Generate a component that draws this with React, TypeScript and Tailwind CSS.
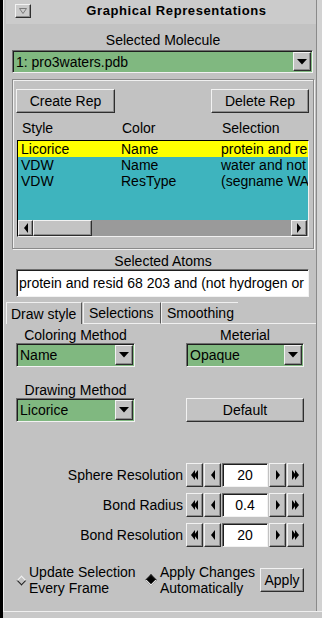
import React from "react";

// bevel helpers (Tk-style 3D borders)
const RAISED =
  "border border-t-[#f2f2f2] border-l-[#f2f2f2] border-r-[#2e2e2e] border-b-[#2e2e2e] shadow-[inset_-1px_-1px_0_#8c8c8c]";
const SUNKEN =
  "border border-t-[#6e6e6e] border-l-[#6e6e6e] border-r-[#f2f2f2] border-b-[#f2f2f2] shadow-[inset_1px_1px_0_#1e1e1e]";

function DownArrow() {
  return (
    <svg width="10" height="6" viewBox="0 0 10 6">
      <path d="M0 0h10L5 5.5z" fill="#000" />
    </svg>
  );
}

function Tri({ dir, double }: { dir: "l" | "r"; double?: boolean }) {
  const one = dir === "l" ? "M0 5L4 0v10z" : "M0 0l4 5-4 5z";
  const two = dir === "l" ? "M3 5L7 0v10z" : "M3 0l4 5-4 5z";
  return (
    <svg width={double ? 7 : 4} height="10" viewBox={`0 0 ${double ? 7 : 4} 10`}>
      <path d={one} fill="#000" />
      {double && <path d={two} fill="#000" />}
    </svg>
  );
}

function OptionMenu({ value, className }: { value: string; className: string }) {
  return (
    <div className={`flex bg-[#80b880] ${SUNKEN} ${className}`}>
      <span className="flex-1 pl-[3px] self-center whitespace-nowrap overflow-hidden">{value}</span>
      <span
        className={`w-[18px] my-[1px] mr-[1px] flex items-center justify-center bg-[#c3c3c3] ${RAISED}`}
      >
        <DownArrow />
      </span>
    </div>
  );
}

function Spinner({ label, value }: { label: string; value: string }) {
  const btn = `w-[17px] h-[24px] flex items-center justify-center bg-[#c3c3c3] ${RAISED}`;
  return (
    <div className="flex items-center h-[24px] pr-[12px]">
      <span className="flex-1 text-right pr-[3px]">{label}</span>
      <div className="flex gap-[1px]">
        <span className={btn}><Tri dir="l" double /></span>
        <span className={btn}><Tri dir="l" /></span>
        <span className={`w-[46px] h-[24px] flex items-center justify-center bg-white ${SUNKEN}`}>
          {value}
        </span>
        <span className={btn}><Tri dir="r" /></span>
        <span className={btn}><Tri dir="r" double /></span>
      </div>
    </div>
  );
}

const REPS = [
  { style: "Licorice", color: "Name", sel: "protein and resid 68 203", active: true },
  { style: "VDW", color: "Name", sel: "water and not hydrogen", active: false },
  { style: "VDW", color: "ResType", sel: "(segname WAT) and noh", active: false },
];

export default function App() {
  return (
    <div className="w-[322px] h-[618px] bg-black flex font-['Liberation_Sans',Arial,sans-serif] text-[14px] leading-[16px] text-black">
      <div className="ml-[3px] flex-1 flex flex-col bg-[#cdcdcd]">
        <div className="flex-1 flex min-h-0">
          {/* left frame */}
          <div className="w-[3px] bg-[#c2c2c2] border-l border-l-[#ececec]" />

          <div className="w-[310px] flex flex-col bg-[#c2c2c2]">
            {/* title bar */}
            <div className="h-[24px] flex items-start bg-[#cbcbcb]">
              <span className={`ml-[9px] mt-[4px] w-[16px] h-[14px] flex items-center justify-center bg-[#cbcbcb] ${RAISED}`}>
                <svg width="8" height="6" viewBox="0 0 8 6">
                  <path d="M0.5 0.5h7L4 5.5z" fill="none" stroke="#7a7a7a" />
                </svg>
              </span>
              <span className="flex-1 pl-[6px] text-center font-bold text-[13px] tracking-[0.6px] leading-[22px]">
                Graphical Representations
              </span>
            </div>

            {/* molecule selection */}
            <div className="mt-[8px] ml-[6px] w-[302px] text-center h-[16px]">Selected Molecule</div>
            <OptionMenu value="1: pro3waters.pdb" className="mt-[2px] ml-[6px] w-[301px] h-[23px]" />

            {/* reps group */}
            <div className="mt-[6px] ml-[6px] w-[302px] h-[170px] flex flex-col border border-[#8a8a8a] shadow-[inset_1px_1px_0_#f0f0f0,1px_1px_0_#f0f0f0]">
              <div className="mt-[9px] pl-[3px] pr-[4px] flex justify-between">
                <button className={`w-[99px] h-[24px] bg-[#c3c3c3] ${RAISED}`}>Create Rep</button>
                <button className={`w-[98px] h-[24px] bg-[#c3c3c3] ${RAISED}`}>Delete Rep</button>
              </div>
              <div className="mt-[7px] h-[16px] pl-[9px] flex">
                <span className="w-[100px]">Style</span>
                <span className="w-[100px]">Color</span>
                <span className="w-[80px]">Selection</span>
              </div>
              <div className="mt-[4px] ml-[4px] w-[292px] h-[97px] flex flex-col bg-[#3eb4be] border border-t-black border-l-black border-r-[#f0f0f0] border-b-[#f0f0f0]">
                {REPS.map((r, i) => (
                  <div
                    key={i}
                    className={`h-[16px] pl-[3px] flex whitespace-nowrap overflow-hidden ${r.active ? "bg-[#ffff00]" : ""}`}
                  >
                    <span className="w-[100px] shrink-0">{r.style}</span>
                    <span className="w-[100px] shrink-0">{r.color}</span>
                    <span className="shrink-0">{r.sel}</span>
                  </div>
                ))}
                <div className="flex-1" />
                {/* horizontal scrollbar */}
                <div className="h-[16px] flex bg-[#9a9a9a]">
                  <span className={`w-[15px] flex items-center justify-center bg-[#c3c3c3] ${RAISED}`}>
                    <Tri dir="l" />
                  </span>
                  <span className={`w-[59px] bg-[#c3c3c3] ${RAISED}`} />
                  <span className="flex-1" />
                  <span className={`w-[16px] mr-[1px] flex items-center justify-center bg-[#c3c3c3] ${RAISED}`}>
                    <Tri dir="r" />
                  </span>
                </div>
              </div>
            </div>

            {/* selected atoms */}
            <div className="mt-[4px] ml-[6px] w-[302px] h-[16px] text-center">Selected Atoms</div>
            <div className={`ml-[10px] w-[293px] h-[28px] flex items-center pl-[2px] bg-white whitespace-nowrap overflow-hidden ${SUNKEN}`}>
              protein and resid 68 203 and (not hydrogen or name CA)
            </div>

            {/* tabs */}
            <div className="mt-[5px] h-[22px] flex">
              <span className="w-[76px] pl-[4px] flex items-center border-t border-l border-r border-t-[#f0f0f0] border-l-[#f0f0f0] border-r-[#555]">
                Draw style
              </span>
              <span className="ml-[1px] w-[78px] pl-[5px] flex items-center border-t border-l border-r border-b border-t-[#f0f0f0] border-l-[#f0f0f0] border-r-[#555] border-b-[#f0f0f0]">
                Selections
              </span>
              <span className="w-[77px] pl-[5px] flex items-center border-t border-l border-b border-t-[#f0f0f0] border-l-[#f0f0f0] border-b-[#f0f0f0]">
                Smoothing
              </span>
              <span className="flex-1 border-b border-b-[#f0f0f0]" />
            </div>

            {/* draw style pane */}
            <div className="flex-1 flex flex-col">
              <div className="mt-[3px] flex">
                <div className="ml-[10px] w-[119px] flex flex-col">
                  <span className="h-[16px] text-center">Coloring Method</span>
                  <OptionMenu value="Name" className="h-[24px]" />
                  <span className="mt-[15px] h-[16px] text-center">Drawing Method</span>
                  <OptionMenu value="Licorice" className="h-[24px]" />
                </div>
                <div className="ml-[51px] w-[118px] flex flex-col">
                  <span className="h-[16px] text-center">Meterial</span>
                  <OptionMenu value="Opaque" className="h-[24px]" />
                  <span className="mt-[15px] h-[16px]" />
                  <button className={`h-[24px] bg-[#c3c3c3] ${RAISED}`}>Default</button>
                </div>
              </div>

              <div className="mt-[41px] flex flex-col gap-[6px]">
                <Spinner label="Sphere Resolution" value="20" />
                <Spinner label="Bond Radius" value="0.4" />
                <Spinner label="Bond Resolution" value="20" />
              </div>

              <div className="mt-[21px] h-[24px] flex items-center pl-[10px]">
                <span className="w-[10px] flex justify-center">
                  <span className="w-[7px] h-[7px] rotate-45 bg-[#c2c2c2] border border-t-[#f4f4f4] border-l-[#f4f4f4] border-r-[#1e1e1e] border-b-[#1e1e1e]" />
                </span>
                <span className="ml-[3px] w-[117px]">
                  Update Selection
                  <br />
                  Every Frame
                </span>
                <span className="w-[10px] flex justify-center">
                  <span className="w-[8px] h-[8px] rotate-45 bg-black border border-t-[#1e1e1e] border-l-[#1e1e1e] border-r-[#f4f4f4] border-b-[#f4f4f4]" />
                </span>
                <span className="ml-[4px] w-[100px]">
                  Apply Changes
                  <br />
                  Automatically
                </span>
                <button className={`w-[44px] h-[24px] bg-[#c3c3c3] ${RAISED}`}>Apply</button>
              </div>
            </div>
          </div>

          {/* right frame */}
          <div className="flex-1 border-l border-l-[#8a8a8a] bg-[#d2d2d2]" />
        </div>
        {/* bottom frame */}
        <div className="h-[7px] border-t border-t-[#efefef] bg-[#c8c8c8]" />
      </div>
    </div>
  );
}
